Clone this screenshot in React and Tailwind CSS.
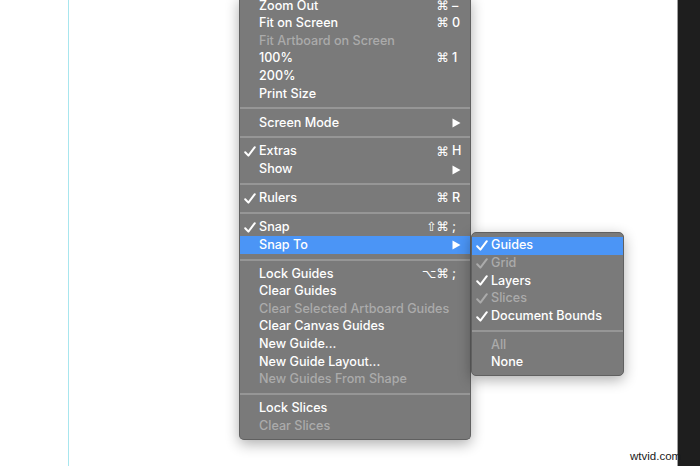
import React from "react";

const Check = () => (
  <svg width="12" height="11" viewBox="0 0 12 11" className="block">
    <path d="M1.2 6.2 L4.4 9.6 L10.8 1.2" fill="none" stroke="currentColor" strokeWidth="2" strokeLinecap="round" strokeLinejoin="round" />
  </svg>
);

const Arrow = () => (
  <svg width="9" height="10" viewBox="0 0 9 10" className="block">
    <polygon points="0.5,0.5 8.5,5 0.5,9.5" fill="currentColor" />
  </svg>
);

function Row({ label, check, mods, k, arrow, disabled, active }) {
  return (
    <div
      className={`flex items-center h-[17.6px] pr-[8px] ${active ? "bg-[#4b95f6]" : ""} ${disabled ? "text-[#ababab]" : "text-white"}`}
    >
      <div className="w-[19px] pl-[4px] shrink-0">{check ? <Check /> : null}</div>
      <span className="flex-1 whitespace-nowrap">{label}</span>
      {arrow ? (
        <div className="w-[10px] shrink-0"><Arrow /></div>
      ) : k ? (
        <div className="flex items-center shrink-0">
          <span className="font-['DejaVu_Sans',sans-serif] text-[12.5px] mr-[3px]">{mods}</span>
          <span className="w-[10px] text-left">{k}</span>
        </div>
      ) : null}
    </div>
  );
}

const Sep = () => (
  <div className="py-[4.7px]">
    <div className="h-[2px] bg-[#969696]" />
  </div>
);

export default function App() {
  return (
    <div className="w-[700px] h-[466px] flex bg-white overflow-hidden font-['Inter','Liberation_Sans',sans-serif] text-[12.6px] font-medium">
      <div className="relative flex-1 bg-white">
        <div className="absolute left-[68px] top-0 bottom-0 w-[1px] bg-[#a8e6ee]" />

        <div className="absolute left-[239px] top-[-2.8px] w-[232px] bg-[#7a7a7a] border border-t-0 border-[#606060] rounded-b-[5px] pb-[3.8px] shadow-[0_4px_14px_rgba(0,0,0,0.32)]">
          <Row label="Zoom Out" mods="⌘" k="–" />
          <Row label="Fit on Screen" mods="⌘" k="0" />
          <Row label="Fit Artboard on Screen" disabled />
          <Row label="100%" mods="⌘" k="1" />
          <Row label="200%" />
          <Row label="Print Size" />
          <Sep />
          <Row label="Screen Mode" arrow />
          <Sep />
          <Row label="Extras" check mods="⌘" k="H" />
          <Row label="Show" arrow />
          <Sep />
          <Row label="Rulers" check mods="⌘" k="R" />
          <Sep />
          <Row label="Snap" check mods="⇧⌘" k=";" />
          <Row label="Snap To" arrow active />
          <Sep />
          <Row label="Lock Guides" mods="⌥⌘" k=";" />
          <Row label="Clear Guides" />
          <Row label="Clear Selected Artboard Guides" disabled />
          <Row label="Clear Canvas Guides" />
          <Row label="New Guide..." />
          <Row label="New Guide Layout..." />
          <Row label="New Guides From Shape" disabled />
          <Sep />
          <Row label="Lock Slices" />
          <Row label="Clear Slices" disabled />
        </div>

        <div className="absolute left-[471px] top-[232px] w-[153px] bg-[#7a7a7a] border border-[#606060] rounded-[5px] pt-[4px] pb-[3.4px] shadow-[0_4px_14px_rgba(0,0,0,0.32)]">
          <Row label="Guides" check active />
          <Row label="Grid" check disabled />
          <Row label="Layers" check />
          <Row label="Slices" check disabled />
          <Row label="Document Bounds" check />
          <Sep />
          <Row label="All" disabled />
          <Row label="None" />
        </div>

        <div className="absolute left-[630px] top-[449px] text-[11.5px] leading-[14px] font-normal text-[#1a1a1a] font-['Liberation_Sans',sans-serif]">
          wtvid.com
        </div>
      </div>
      <div className="w-[23px] shrink-0 border-l border-[#a0a0a0] bg-[#1e1e1e]" />
    </div>
  );
}
